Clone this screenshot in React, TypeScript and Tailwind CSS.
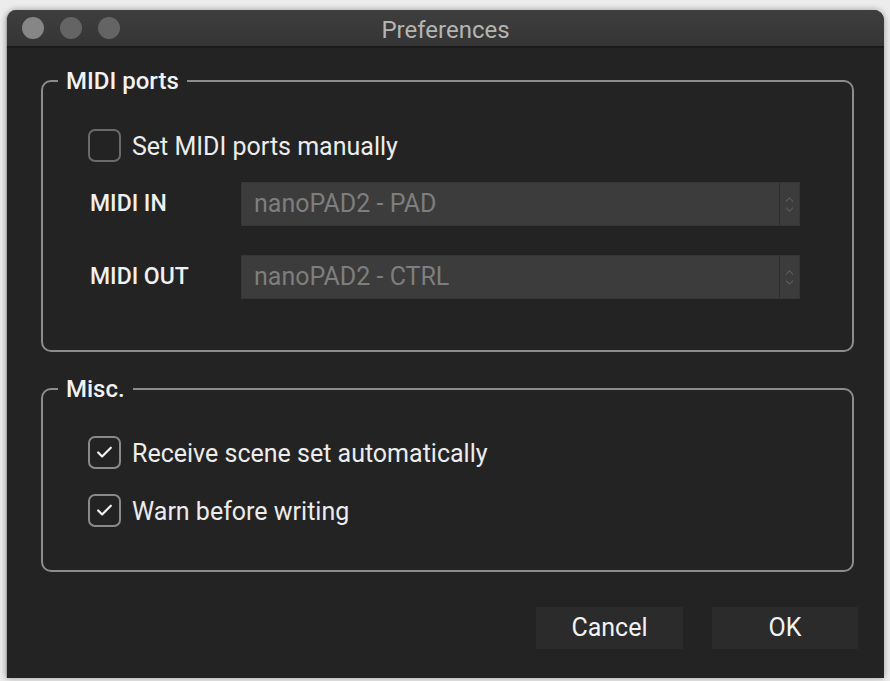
import {Check, ChevronDown, ChevronUp} from "lucide-react"

function Checkbox({checked, label}: { checked: boolean, label: string }) {
    return (
        <div className="flex items-center h-[34px]">
            <div
                className={`flex items-center justify-center w-[33px] h-[33px] rounded-[7px] border-2 ${checked ? "border-[#8a8a8a]" : "border-[#6a6a6a]"}`}>
                {checked && <Check size={19} strokeWidth={2.75} className="text-[#f2f2f2]"/>}
            </div>
            <span className="ml-[11px] pt-[3px] text-[25px] text-[#ececec]">{label}</span>
        </div>
    )
}

function PortSelect({label, value}: { label: string, value: string }) {
    return (
        <div className="flex items-center">
            <span className="w-[153px] pl-[2px] text-[23px] font-medium text-[#f0f0f0]">{label}</span>
            <div className="flex w-[559px] h-[44px] bg-[#3c3c3c] border border-[#363636]">
                <span className="flex-1 flex items-center pl-[12px] text-[25px] text-[#7e7e7e]">{value}</span>
                <div className="w-[20px] flex flex-col items-center justify-center border-l border-[#2c2c2c] text-[#5c5c5c]">
                    <ChevronUp size={13} strokeWidth={2} className="-mb-[3px]"/>
                    <ChevronDown size={13} strokeWidth={2}/>
                </div>
            </div>
        </div>
    )
}

export default function App() {
    return (
        <div className="min-h-[681px] bg-[#ececec] pt-[10px] pl-[6px]" style={{fontFamily: "Roboto, 'Liberation Sans', sans-serif"}}>
            <div className="w-[878px] h-[668px] bg-[#232323] rounded-t-[10px] overflow-hidden border-l border-[#a8a8a8] shadow-[0_0_6px_rgba(0,0,0,0.35)] flex flex-col">
                <div className="relative h-[38px] flex items-center bg-gradient-to-b from-[#3e3e3e] to-[#353535] border-b-2 border-[#1a1a1a]">
                    <div className="flex items-center gap-[16px] pl-[15px]">
                        <div className="w-[22px] h-[22px] rounded-full bg-[#868686]"/>
                        <div className="w-[22px] h-[22px] rounded-full bg-[#646464]"/>
                        <div className="w-[22px] h-[22px] rounded-full bg-[#646464]"/>
                    </div>
                    <div className="absolute inset-0 flex items-center justify-center pt-[4px] text-[24px] text-[#b4b4b4]">
                        Preferences
                    </div>
                </div>

                <div className="flex flex-col pl-[34px] pr-[30px] pt-[20px]">
                    <fieldset className="border-2 border-[#8c8c8c] rounded-[10px] pb-[51px]">
                        <legend className="ml-[15px] px-[8px] text-[24px] leading-[26px] font-medium text-[#f2f2f2]">MIDI ports</legend>
                        <div className="pl-[45px]">
                            <div className="mt-[34px]">
                                <Checkbox checked={false} label="Set MIDI ports manually"/>
                            </div>
                            <div className="mt-[20px]">
                                <PortSelect label="MIDI IN" value="nanoPAD2 - PAD"/>
                            </div>
                            <div className="mt-[29px]">
                                <PortSelect label="MIDI OUT" value="nanoPAD2 - CTRL"/>
                            </div>
                        </div>
                    </fieldset>

                    <fieldset className="mt-[24px] border-2 border-[#8c8c8c] rounded-[10px] pb-[43px]">
                        <legend className="ml-[15px] px-[8px] text-[24px] leading-[26px] font-medium text-[#f2f2f2]">Misc.</legend>
                        <div className="pl-[45px]">
                            <div className="mt-[33px]">
                                <Checkbox checked={true} label="Receive scene set automatically"/>
                            </div>
                            <div className="mt-[24px]">
                                <Checkbox checked={true} label="Warn before writing"/>
                            </div>
                        </div>
                    </fieldset>

                    <div className="flex justify-end gap-[29px] mt-[35px] mr-[-4px]">
                        <button className="w-[147px] h-[42px] bg-[#2b2b2b] text-[25px] text-[#f2f2f2]">Cancel</button>
                        <button className="w-[146px] h-[42px] bg-[#2b2b2b] text-[25px] text-[#f2f2f2]">OK</button>
                    </div>
                </div>
            </div>
        </div>
    )
}
